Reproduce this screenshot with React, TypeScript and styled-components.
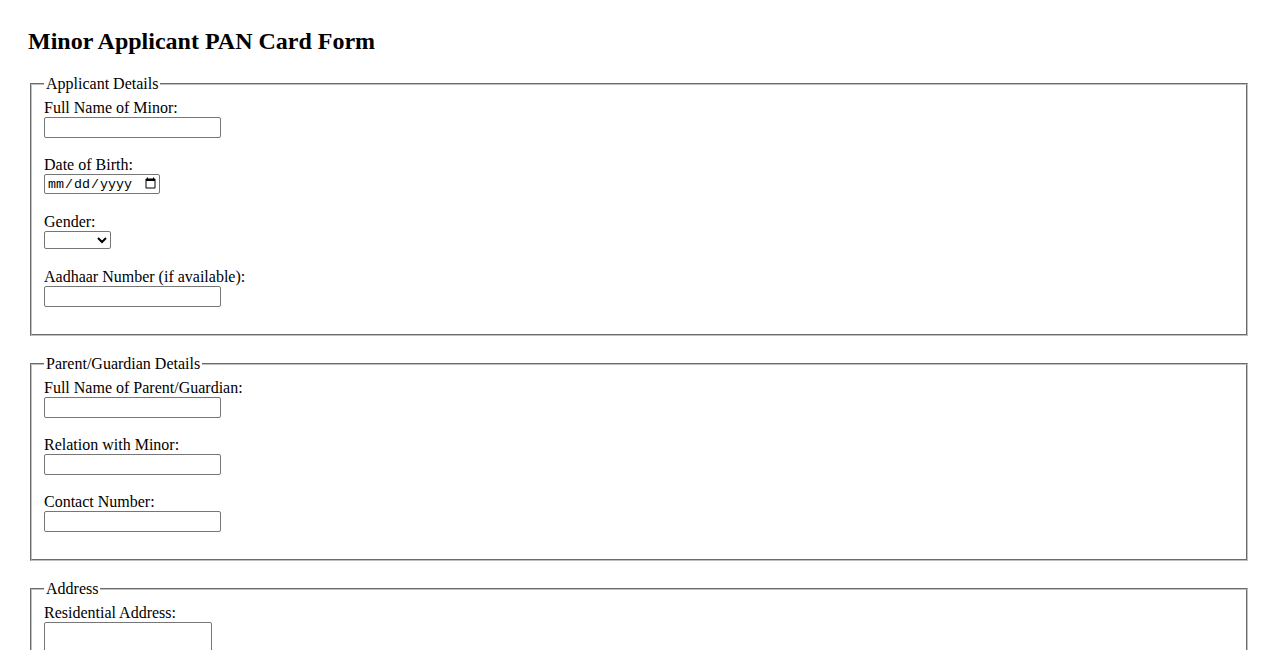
import React from "react";
import styled, { createGlobalStyle } from "styled-components";

const GlobalStyle = createGlobalStyle`
  html, body {
    margin: 0;
    padding: 0;
    background: #ffffff;
  }
  body {
    font-family: "Liberation Serif", "Times New Roman", serif;
    font-size: 16px;
    color: #000000;
  }
`;

const Page = styled.div`
  padding: 28px 28px 28px 28px;
`;

const Title = styled.h2`
  font-family: "Liberation Serif", "Times New Roman", serif;
  font-size: 24px;
  font-weight: bold;
  line-height: 27.6px;
  margin: 0 0 19px 0;
`;

const Form = styled.form`
  display: block;
`;

const Section = styled.fieldset`
  margin: 0 2px 19px 2px;
  padding: 5.6px 12px 9px 12px;
  border: 2px groove rgb(192, 192, 192);
  min-inline-size: min-content;
`;

const Legend = styled.legend`
  padding: 0 2px;
  line-height: 18.4px;
  font-size: 16px;
`;

const Field = styled.div`
  margin-bottom: 16.5px;
`;

const Label = styled.label`
  display: block;
  line-height: 18.5px;
  font-size: 16px;
`;

const ControlLine = styled.div<{ $h?: number }>`
  height: ${(p) => p.$h ?? 22}px;
  display: flex;
  align-items: flex-start;
`;

const TextInput = styled.input`
  box-sizing: border-box;
  width: 177px;
  height: 21px;
  margin: 0;
  padding: 1px 2px;
  border: 1px solid #767676;
  border-radius: 2px;
  font-family: "Liberation Sans", Arial, sans-serif;
  font-size: 13.333px;
  background: #ffffff;
`;

const DateInput = styled.input`
  box-sizing: border-box;
  width: 116px;
  height: 20px;
  margin: 0;
  padding: 0 0 0 2px;
  border: 1px solid #767676;
  border-radius: 2px;
  font-family: "Liberation Mono", "DejaVu Sans Mono", monospace;
  font-size: 13.333px;
  background: #ffffff;
  color: #000;
`;

const Select = styled.select`
  box-sizing: border-box;
  width: 67px;
  height: 18px;
  margin: 0;
  padding: 0;
  border: 1px solid #767676;
  border-radius: 2px;
  font-family: "Liberation Sans", Arial, sans-serif;
  font-size: 13.333px;
  background: #ffffff;
  color: #000;
`;

const TextArea = styled.textarea`
  box-sizing: border-box;
  width: 168px;
  height: 38px;
  margin: 0;
  padding: 2px;
  border: 1px solid #767676;
  border-radius: 2px;
  font-family: "Liberation Mono", monospace;
  font-size: 13.333px;
  background: #ffffff;
`;

const Button = styled.button`
  font-family: "Liberation Sans", Arial, sans-serif;
  font-size: 13.333px;
  padding: 1px 6px;
`;

export default function App() {
  return (
    <>
      <GlobalStyle />
      <Page>
        <Title>Minor Applicant PAN Card Form</Title>
        <Form onSubmit={(e) => e.preventDefault()}>
          <Section>
            <Legend>Applicant Details</Legend>
            <Field>
              <Label htmlFor="minorName">Full Name of Minor:</Label>
              <ControlLine>
                <TextInput id="minorName" type="text" />
              </ControlLine>
            </Field>
            <Field>
              <Label htmlFor="dob">Date of Birth:</Label>
              <ControlLine>
                <DateInput id="dob" type="date" />
              </ControlLine>
            </Field>
            <Field>
              <Label htmlFor="gender">Gender:</Label>
              <ControlLine $h={20}>
                <Select id="gender" defaultValue="">
                  <option value=""></option>
                  <option value="male">Male</option>
                  <option value="female">Female</option>
                  <option value="other">Other</option>
                </Select>
              </ControlLine>
            </Field>
            <Field>
              <Label htmlFor="aadhaar">Aadhaar Number (if available):</Label>
              <ControlLine>
                <TextInput id="aadhaar" type="text" />
              </ControlLine>
            </Field>
          </Section>

          <Section>
            <Legend>Parent/Guardian Details</Legend>
            <Field>
              <Label htmlFor="parentName">Full Name of Parent/Guardian:</Label>
              <ControlLine>
                <TextInput id="parentName" type="text" />
              </ControlLine>
            </Field>
            <Field>
              <Label htmlFor="relation">Relation with Minor:</Label>
              <ControlLine>
                <TextInput id="relation" type="text" />
              </ControlLine>
            </Field>
            <Field>
              <Label htmlFor="contact">Contact Number:</Label>
              <ControlLine>
                <TextInput id="contact" type="text" />
              </ControlLine>
            </Field>
          </Section>

          <Section>
            <Legend>Address</Legend>
            <Field>
              <Label htmlFor="address">Residential Address:</Label>
              <ControlLine $h={40}>
                <TextArea id="address" />
              </ControlLine>
            </Field>
            <Field>
              <Label htmlFor="pin">PIN Code:</Label>
              <ControlLine>
                <TextInput id="pin" type="text" />
              </ControlLine>
            </Field>
          </Section>

          <Button type="submit">Submit</Button>
        </Form>
      </Page>
    </>
  );
}
